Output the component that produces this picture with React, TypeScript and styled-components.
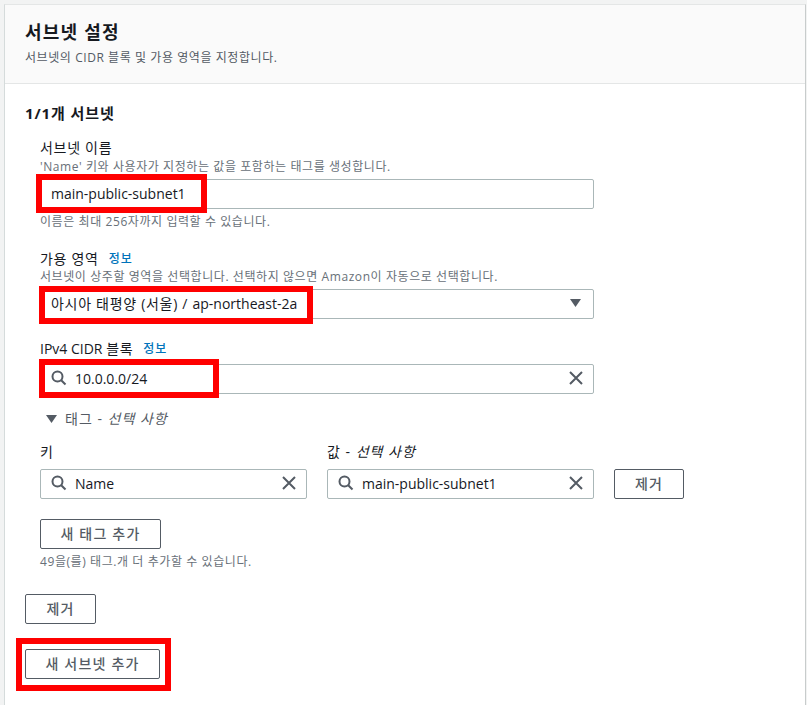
import styled, { createGlobalStyle } from 'styled-components';

const GlobalStyle = createGlobalStyle`
	html, body {
		margin: 0;
		padding: 0;
		background: #f2f3f3;
		font-family: 'Open Sans', 'Noto Sans CJK KR', sans-serif;
		color: #16191f;
	}
`;

const Page = styled.div`
	width: 807px;
	height: 705px;
	padding: 4px 1px 0 4px;
	box-sizing: border-box;
	overflow: hidden;
`;

const Panel = styled.section`
	height: 701px;
	background: #fff;
	border-top: 1px solid #e4e6e6;
	border-left: 1px solid #d5dbdb;
	border-right: 1px solid #c8cccc;
	box-sizing: border-box;
`;

const Header = styled.header`
	height: 79px;
	box-sizing: border-box;
	padding: 15px 20px 0;
	background: #fafafa;
	border-bottom: 1px solid #e4e6e6;
`;

const Title = styled.h2`
	margin: 0;
	font-size: 18px;
	line-height: 24px;
	font-weight: 700;
	letter-spacing: 1.2px;
`;

const Description = styled.p`
	margin: 5px 0 0;
	font-size: 12px;
	line-height: 18px;
	letter-spacing: 0.57px;
	color: #545b64;
`;

const Body = styled.div`
	padding: 19px 20px 0;
`;

const SectionTitle = styled.h3`
	margin: 0;
	font-size: 15px;
	line-height: 20px;
	font-weight: 700;
	letter-spacing: 0.9px;
`;

const Nested = styled.div`
	padding-left: 15px;
	width: 554px;
`;

const Field = styled.div<{ $top: number }>`
	margin-top: ${p => p.$top}px;
`;

const Label = styled.div`
	display: flex;
	align-items: center;
	gap: 10px;
	font-size: 14px;
	line-height: 18px;
	color: #16191f;
`;

// hangul runs sit wider than the latin ones in the reference
const Ko = styled.span`
	letter-spacing: 0.7px;
`;

const InfoLink = styled.a`
	font-size: 12px;
	font-weight: 500;
	letter-spacing: 1px;
	color: #0073bb;
`;

const Hint = styled.div<{ $top: number }>`
	margin-top: ${p => p.$top}px;
	font-size: 12px;
	line-height: 16px;
	letter-spacing: 0.58px;
	white-space: nowrap;
	color: #687078;
`;

const Control = styled.div<{ $width?: number; $top?: number }>`
	position: relative;
	display: flex;
	align-items: center;
	gap: 8px;
	width: ${p => p.$width ?? 554}px;
	height: 30px;
	margin-top: ${p => p.$top ?? 0}px;
	padding: 0 10px 2px;
	box-sizing: border-box;
	background: #fff;
	border: 1px solid #aab7b8;
	border-radius: 2px;
	font-size: 14px;
	color: #16191f;
`;

const ControlText = styled.span`
	flex: 1;
	white-space: nowrap;
`;

const Highlight = styled.div<{ $left: number; $top: number; $width: number; $height: number }>`
	position: absolute;
	left: ${p => p.$left}px;
	top: ${p => p.$top}px;
	width: ${p => p.$width}px;
	height: ${p => p.$height}px;
	box-sizing: border-box;
	border: 6px solid #ff0000;
	pointer-events: none;
`;

const TagToggle = styled.div`
	display: flex;
	align-items: center;
	gap: 7px;
	margin: 16px 0 0 6px;
	font-size: 14px;
	line-height: 18px;
	letter-spacing: 1px;
	color: #545b64;
`;

const Optional = styled.em`
	font-style: italic;
`;

const TagRow = styled.div`
	display: grid;
	grid-template-columns: 267px 267px 70px;
	column-gap: 20px;
	align-items: end;
	width: 644px;
	margin-top: 14px;
`;

const TagLabel = styled(Label)`
	height: 20px;
	margin-bottom: 7px;
	letter-spacing: 1px;
`;

const Button = styled.button<{ $width: number }>`
	position: relative;
	display: block;
	width: ${p => p.$width}px;
	height: 30px;
	padding: 0 0 2px;
	background: #fff;
	border: 1px solid #545b64;
	border-radius: 2px;
	font-family: inherit;
	font-size: 14px;
	font-weight: 500;
	letter-spacing: 1.2px;
	color: #545b64;
`;

const SelectCaret = styled.span`
	display: flex;
	margin-right: 1px;
`;

const SearchIcon = () => (
	<svg width="16" height="16" viewBox="0 0 16 16" fill="none" stroke="#545b64" strokeWidth="2">
		<circle cx="6.5" cy="6.5" r="5" />
		<path d="M10.2 10.2 14.5 14.5" />
	</svg>
);

const ClearIcon = () => (
	<svg width="16" height="16" viewBox="0 0 16 16" fill="none" stroke="#545b64" strokeWidth="2">
		<path d="M3 2l12 12M15 2 3 14" />
	</svg>
);

const Caret = () => (
	<svg width="12" height="12" viewBox="0 0 12 12" fill="#545b64">
		<path d="M0 2h11L5.5 10z" />
	</svg>
);

const App = () => {
	return (
		<Page>
			<GlobalStyle />
			<Panel>
				<Header>
					<Title>서브넷 설정</Title>
					<Description>서브넷의 CIDR 블록 및 가용 영역을 지정합니다.</Description>
				</Header>

				<Body>
					<SectionTitle>1/1개 서브넷</SectionTitle>

					<Nested>
						<Field $top={16}>
							<Label>
								<Ko>서브넷 이름</Ko>
							</Label>
							<Hint $top={2}>'Name' 키와 사용자가 지정하는 값을 포함하는 태그를 생성합니다.</Hint>
							<Control $top={4}>
								<ControlText>main-public-subnet1</ControlText>
								<Highlight $left={-5} $top={-6} $width={171} $height={39} />
							</Control>
							<Hint $top={5}>이름은 최대 256자까지 입력할 수 있습니다.</Hint>
						</Field>

						<Field $top={20}>
							<Label>
								<Ko>가용 영역</Ko>
								<InfoLink>정보</InfoLink>
							</Label>
							<Hint $top={1}>서브넷이 상주할 영역을 선택합니다. 선택하지 않으면 Amazon이 자동으로 선택합니다.</Hint>
							<Control $top={4}>
								<ControlText>
									<Ko>아시아 태평양 (서울) / </Ko>ap-northeast-2a
								</ControlText>
								<SelectCaret>
									<Caret />
								</SelectCaret>
								<Highlight $left={-2} $top={-4} $width={274} $height={38} />
							</Control>
						</Field>

						<Field $top={21}>
							<Label>
								<span>
									IPv4 CIDR <Ko>블록</Ko>
								</span>
								<InfoLink>정보</InfoLink>
							</Label>
							<Control $top={6}>
								<SearchIcon />
								<ControlText>10.0.0.0/24</ControlText>
								<ClearIcon />
								<Highlight $left={-2} $top={-6} $width={180} $height={39} />
							</Control>
						</Field>

						<TagToggle>
							<Caret />
							<span>
								태그 - <Optional>선택 사항</Optional>
							</span>
						</TagToggle>

						<TagRow>
							<div>
								<TagLabel>키</TagLabel>
								<Control $width={267}>
									<SearchIcon />
									<ControlText>Name</ControlText>
									<ClearIcon />
								</Control>
							</div>
							<div>
								<TagLabel>
									<span>
										값 - <Optional>선택 사항</Optional>
									</span>
								</TagLabel>
								<Control $width={267}>
									<SearchIcon />
									<ControlText>main-public-subnet1</ControlText>
									<ClearIcon />
								</Control>
							</div>
							<Button $width={70}>제거</Button>
						</TagRow>

						<Field $top={20}>
							<Button $width={121}>새 태그 추가</Button>
							<Hint $top={5}>49을(를) 태그.개 더 추가할 수 있습니다.</Hint>
						</Field>
					</Nested>

					<Field $top={24}>
						<Button $width={71}>제거</Button>
					</Field>
					<Field $top={25}>
						<Button $width={135}>
							새 서브넷 추가
							<Highlight $left={-10} $top={-12} $width={155} $height={53} />
						</Button>
					</Field>
				</Body>
			</Panel>
		</Page>
	);
};

export default App;
